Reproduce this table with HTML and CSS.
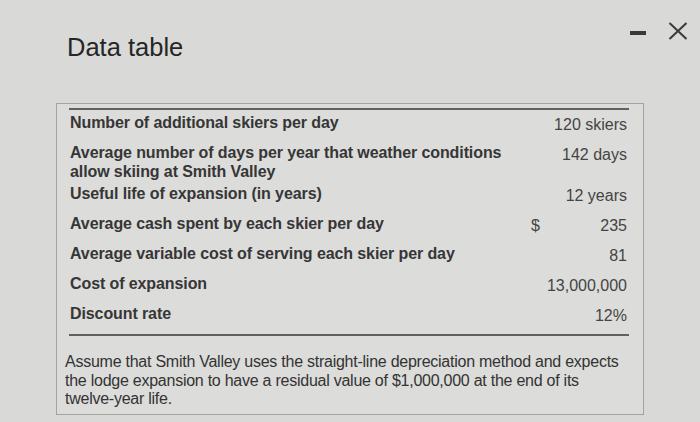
FILE: index.html
```html
<!DOCTYPE html>
<html>
<head>
<meta charset="utf-8">
<link rel="stylesheet" href="styles.css">
</head>
<body>
<div class="dialog">
  <div class="header">
    <h1 class="title">Data table</h1>
    <div class="controls">
      <span class="minimize"></span>
      <svg class="close" width="20" height="18" viewBox="0 0 20 18"><path d="M1.5 1 L18.5 17 M18.5 1 L1.5 17" stroke="#3a3a3a" stroke-width="2" fill="none"/></svg>
    </div>
  </div>
  <div class="panel">
    <table class="data">
      <tbody>
        <tr><td class="label">Number of additional skiers per day</td><td class="cur"></td><td class="val">120 skiers</td></tr>
        <tr class="tall"><td class="label">Average number of days per year that weather conditions<br>allow skiing at Smith Valley</td><td class="cur"></td><td class="val">142 days</td></tr>
        <tr><td class="label">Useful life of expansion (in years)</td><td class="cur"></td><td class="val">12 years</td></tr>
        <tr><td class="label">Average cash spent by each skier per day</td><td class="cur">$</td><td class="val">235</td></tr>
        <tr><td class="label">Average variable cost of serving each skier per day</td><td class="cur"></td><td class="val">81</td></tr>
        <tr><td class="label">Cost of expansion</td><td class="cur"></td><td class="val">13,000,000</td></tr>
        <tr class="last"><td class="label">Discount rate</td><td class="cur"></td><td class="val">12%</td></tr>
      </tbody>
    </table>
    <p class="note">Assume that Smith Valley uses the straight-line depreciation method and expects the lodge expansion to have a residual value of $1,000,000 at the end of its twelve-year life.</p>
  </div>
</div>
</body>
</html>
```

FILE: styles.css
```css
html, body {
  margin: 0;
  padding: 0;
}
body {
  background: #d9d9d7;
  font-family: "Liberation Sans", Arial, sans-serif;
  color: #2e2e2e;
  width: 700px;
  height: 422px;
  overflow: hidden;
}
.header {
  display: flex;
  justify-content: space-between;
  align-items: flex-start;
  height: 103px;
}
.title {
  margin: 33px 0 0 67px;
  font-size: 25.5px;
  font-weight: normal;
  line-height: 28px;
  color: #262626;
}
.controls {
  display: flex;
  align-items: center;
  gap: 22px;
  margin: 22px 12px 0 0;
}
.minimize {
  display: block;
  width: 16px;
  height: 4px;
  margin-top: 3px;
  background: #3a3a3a;
}
.close {
  display: block;
}
.panel {
  margin-left: 56px;
  width: 588px;
  height: 312px;
  border: 1px solid #a3a3a1;
  background: #dcdcda;
  padding: 4px 14px 0 12px;
  box-sizing: border-box;
}
.data {
  width: 100%;
  border-collapse: collapse;
  border-top: 2px solid #606060;
  border-bottom: 2px solid #606060;
  font-size: 16px;
}
.data td {
  padding: 3px 0 8px 0;
  line-height: 19px;
  vertical-align: top;
}
.data tr.tall td {
  padding-bottom: 0;
}
.data tr.last td {
  padding-bottom: 9px;
}
.label {
  font-weight: bold;
  color: #363636;
  padding-left: 1px !important;
  letter-spacing: -0.1px;
}
.cur {
  width: 16px;
  color: #444;
  padding-left: 4px !important;
  padding-top: 5px !important;
}
.val {
  width: 80px;
  text-align: right;
  color: #444;
  padding-right: 2px !important;
  padding-top: 5px !important;
}
.data tr:not(.tall):not(.last) td.val,
.data tr:not(.tall):not(.last) td.cur {
  padding-bottom: 6px;
}
.note {
  margin: 17px 0 0 -4px;
  font-size: 16px;
  line-height: 18.5px;
  color: #333;
  width: 562px;
  letter-spacing: -0.25px;
}
```
